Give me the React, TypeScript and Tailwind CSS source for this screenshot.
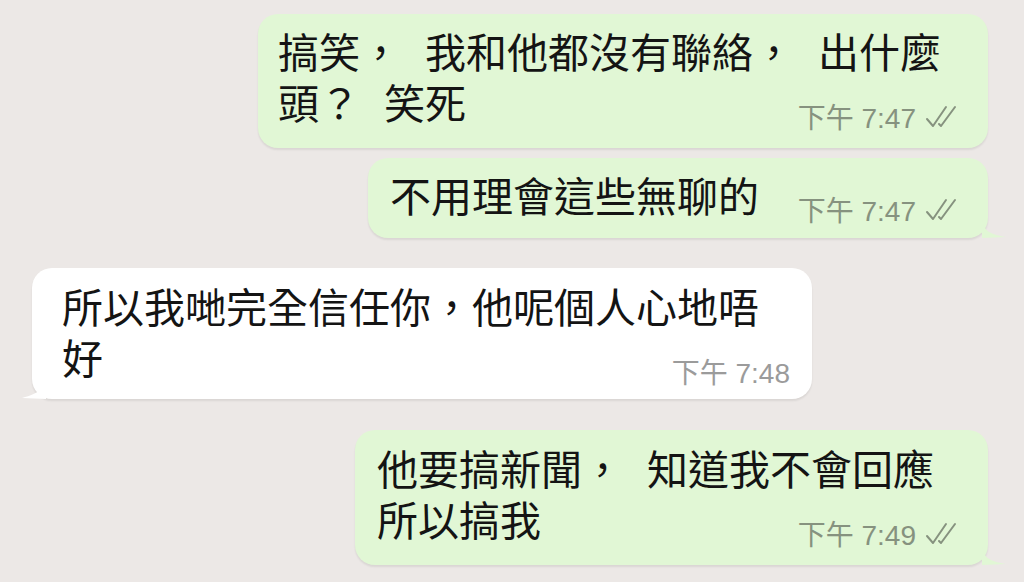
import React from 'react'

type Msg = {
  out: boolean
  lines: string[]
  time: string
  tail?: boolean
  width: string
  pad: string
}

const MESSAGES: Msg[] = [
  {
    out: true,
    lines: ['搞笑， 我和他都沒有聯絡， 出什麼', '頭？ 笑死'],
    time: '下午 7:47',
    width: 'w-[730px]',
    pad: 'pl-[20px] pr-[28px] pt-[11px] pb-[21px]',
  },
  {
    out: true,
    lines: ['不用理會這些無聊的'],
    time: '下午 7:47',
    tail: true,
    width: 'w-[620px]',
    pad: 'pl-[22px] pr-[28px] pt-[11px] pb-[18px]',
  },
  {
    out: false,
    lines: ['所以我哋完全信任你，他呢個人心地唔', '好'],
    time: '下午 7:48',
    tail: true,
    width: 'w-[780px]',
    pad: 'pl-[30px] pr-[22px] pt-[12px] pb-[17px]',
  },
  {
    out: true,
    lines: ['他要搞新聞， 知道我不會回應', '所以搞我'],
    time: '下午 7:49',
    tail: true,
    width: 'w-[633px]',
    pad: 'pl-[22px] pr-[28px] pt-[12px] pb-[21px]',
  },
]

function Ticks() {
  return (
    <svg width="38" height="24" viewBox="0 0 38 24" fill="none" className="ml-[6px] mb-[-2px]">
      <path d="M5 14 L11 21 L24 2" stroke="#86927f" strokeWidth="2" strokeLinecap="round" strokeLinejoin="round" />
      <path d="M17 19 L19 21 L33 2" stroke="#86927f" strokeWidth="2" strokeLinecap="round" strokeLinejoin="round" />
    </svg>
  )
}

function Line({ text }: { text: string }) {
  const parts = text.split(' ')
  return (
    <>
      {parts.map((p, i) => (
        <React.Fragment key={i}>
          {i > 0 && <span className="inline-block w-[24px]" />}
          {p}
        </React.Fragment>
      ))}
    </>
  )
}

function Bubble({ m }: { m: Msg }) {
  const last = m.lines[m.lines.length - 1]
  const rest = m.lines.slice(0, -1)
  return (
    <div className={m.out ? 'flex justify-end pr-[36px]' : 'flex justify-start pl-[32px]'}>
      <div
        className={
          'relative rounded-[20px] shadow-[0_2px_2px_rgba(0,0,0,0.08)] ' +
          m.width + ' ' + m.pad + ' ' +
          (m.out ? 'bg-[#e1f7d5]' : 'bg-white')
        }
      >
        {m.tail && m.out && (
          <svg className="absolute right-[-18px] bottom-0" width="24" height="18" viewBox="0 0 24 18">
            <path d="M0 0 C2 10 6 14 24 17 L0 18 Z" fill="#e1f7d5" />
          </svg>
        )}
        {m.tail && !m.out && (
          <svg className="absolute left-[-10px] bottom-0" width="24" height="22" viewBox="0 0 24 22">
            <path d="M24 0 C22 12 18 16 0 21 L24 22 Z" fill="#ffffff" />
          </svg>
        )}
        <div className="text-[41px] leading-[51px] text-[#141414] font-['Noto_Sans_CJK_TC',sans-serif] whitespace-pre">
          {rest.map((l, i) => (
            <div key={i}>
              <Line text={l} />
            </div>
          ))}
          <div className="flex items-end">
            <span>
              <Line text={last} />
            </span>
            <span className="flex-1" />
            <span
              className={
                "flex items-end text-[28px] leading-[16px] font-['Liberation_Sans','Noto_Sans_CJK_TC',sans-serif] " +
                (m.out ? 'text-[#86927f]' : 'text-[#9b9b9b]')
              }
            >
              {m.time}
              {m.out && <Ticks />}
            </span>
          </div>
        </div>
      </div>
    </div>
  )
}

export default function App() {
  return (
    <div className="w-[1024px] h-[582px] overflow-hidden bg-[#ece8e6] pt-[14px] flex flex-col">
      <Bubble m={MESSAGES[0]} />
      <div className="h-[10px]" />
      <Bubble m={MESSAGES[1]} />
      <div className="h-[30px]" />
      <Bubble m={MESSAGES[2]} />
      <div className="h-[31px]" />
      <Bubble m={MESSAGES[3]} />
    </div>
  )
}
